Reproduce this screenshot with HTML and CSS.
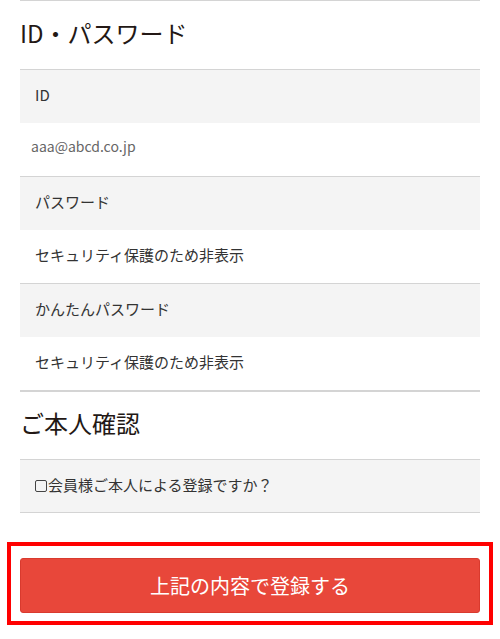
FILE: index.html
```html
<!DOCTYPE html>
<html lang="ja">
<head>
    <meta charset="UTF-8">
    <meta name="viewport" content="width=device-width, initial-scale=1.0">
    <title>登録内容の確認</title>
    <link rel="stylesheet" href="styles.css">
</head>
<body>
    <div class="page">
        <section class="block">
            <h2 class="block-title">ID・パスワード</h2>
            <dl class="fields">
                <dt>ID</dt>
                <dd class="email">aaa@abcd.co.jp</dd>
                <dt>パスワード</dt>
                <dd>セキュリティ保護のため非表示</dd>
                <dt>かんたんパスワード</dt>
                <dd>セキュリティ保護のため非表示</dd>
            </dl>
        </section>

        <section class="block">
            <h2 class="block-title second">ご本人確認</h2>
            <label class="check-row">
                <span class="check-box"></span>会員様ご本人による登録ですか？
            </label>
        </section>

        <div class="submit-area">
            <button class="submit-btn" type="button">上記の内容で登録する</button>
        </div>
    </div>
</body>
</html>
```

FILE: styles.css
```css
body {
    margin: 0;
    font-family: "Noto Sans CJK JP", "Noto Sans", sans-serif;
    color: #333;
    background-color: #fff;
}
.page {
    padding: 0 20px;
}
.block {
    border-top: 1px solid #d4d4d4;
}
.block-title {
    margin: 0;
    height: 64px;
    line-height: 64px;
    padding-bottom: 4px;
    font-size: 24px;
    font-weight: normal;
    color: #231815;
    border-bottom: 1px solid #d4d4d4;
}
.block-title.second {
    height: 63px;
    line-height: 62px;
}
.fields {
    margin: 0;
}
.fields dt,
.fields dd {
    margin: 0;
    height: 50px;
    line-height: 50px;
    padding: 0 15px 3px;
    font-size: 15px;
}
.fields dt {
    background-color: #f4f4f4;
    color: #333;
}
.fields dd {
    color: #333;
    border-bottom: 1px solid #d4d4d4;
}
.fields dd.email {
    padding-left: 11px;
    font-size: 14px;
    color: #666;
    line-height: 46px;
}
.check-row {
    display: flex;
    align-items: center;
    height: 49px;
    padding: 0 15px 3px;
    background-color: #f4f4f4;
    border-bottom: 1px solid #d4d4d4;
    font-size: 15px;
    color: #333;
}
.check-box {
    display: inline-block;
    width: 10px;
    height: 10px;
    border: 1px solid #444;
    border-radius: 2px;
    margin-right: 1px;
    margin-top: 2px;
}
.submit-area {
    margin: 29px -13px 0;
    padding: 12px 9px 8px;
    border: 4px solid #f00;
}
.submit-btn {
    display: block;
    width: 100%;
    height: 55px;
    padding-bottom: 2px;
    border: 1px solid #d93a2e;
    border-radius: 3px;
    background-color: #e8473a;
    color: #fff;
    font-family: "Noto Sans CJK JP", "Noto Sans", sans-serif;
    font-size: 20px;
}
```
